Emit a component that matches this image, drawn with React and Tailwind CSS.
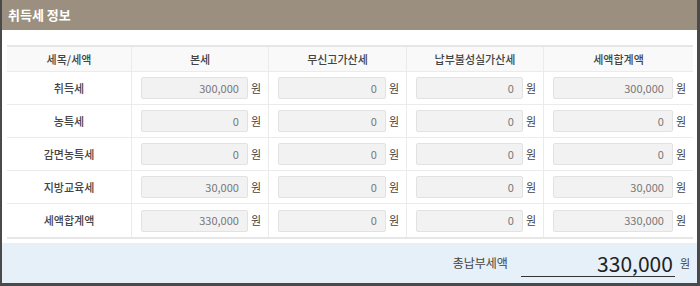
import React from "react";

const rows = [
  { name: "취득세", vals: ["300,000", "0", "0", "300,000"] },
  { name: "농특세", vals: ["0", "0", "0", "0"] },
  { name: "감면농특세", vals: ["0", "0", "0", "0"] },
  { name: "지방교육세", vals: ["30,000", "0", "0", "30,000"] },
  { name: "세액합계액", vals: ["330,000", "0", "0", "330,000"] },
];

const heads = ["세목/세액", "본세", "무신고가산세", "납부불성실가산세", "세액합계액"];

function Amount({ value }) {
  return (
    <div className="flex items-center gap-[3px] pl-[9px] pr-[7px] border-l border-[#ebebeb] h-full">
      <div className="flex-1 h-[22px] bg-[#f2f2f2] border border-[#e2e2e2] rounded-[2px] flex items-center justify-end pr-[8px] text-[11px] text-[#777]">
        {value}
      </div>
      <span className="text-[11px] text-[#444]">원</span>
    </div>
  );
}

export default function App() {
  return (
    <div className="w-[700px] h-[286px] bg-white border-l-2 border-r-[3px] border-b-[3px] border-[#4a4a4a] font-['Noto_Sans_CJK_KR','Noto_Sans',sans-serif] flex flex-col">
      {/* 상단 제목 */}
      <div className="h-[30px] bg-[#9b9080] flex items-center pl-[6px] text-white text-[13px] font-bold">
        취득세 정보
      </div>

      {/* 세액 표 */}
      <div className="mt-[15px] ml-[5px] mr-[4px] border-t-2 border-b-2 border-[#e6e6e6]">
        <div className="grid grid-cols-[124px_137px_138px_137px_150px] h-[25px] bg-[#f9f9f9] border-b border-[#ebebeb]">
          {heads.map((h, i) => (
            <div
              key={h}
              className={`flex items-center justify-center text-[11px] font-medium text-[#444] ${i > 0 ? "border-l border-[#ebebeb]" : ""}`}
            >
              {h}
            </div>
          ))}
        </div>
        {rows.map((r, idx) => (
          <div
            key={r.name}
            className={`grid grid-cols-[124px_137px_138px_137px_150px] h-[33px] ${idx < rows.length - 1 ? "border-b border-[#ebebeb]" : ""}`}
          >
            <div className="flex items-center justify-center text-[11px] font-medium text-[#444]">
              {r.name}
            </div>
            {r.vals.map((v, j) => (
              <Amount key={j} value={v} />
            ))}
          </div>
        ))}
      </div>

      {/* 총납부세액 */}
      <div className="mt-[4px] flex-1 bg-[#e6f0f9] flex items-end justify-end pb-[6px] pr-[7px]">
        <span className="text-[12px] text-[#444] mb-[5px]">총납부세액</span>
        <div className="ml-[13px] w-[154px] border-b border-[#333] text-right pr-[2px] text-[21px] leading-[26px] text-[#222]">
          330,000
        </div>
        <span className="ml-[5px] text-[11px] text-[#444] mb-[6px]">원</span>
      </div>
    </div>
  );
}
